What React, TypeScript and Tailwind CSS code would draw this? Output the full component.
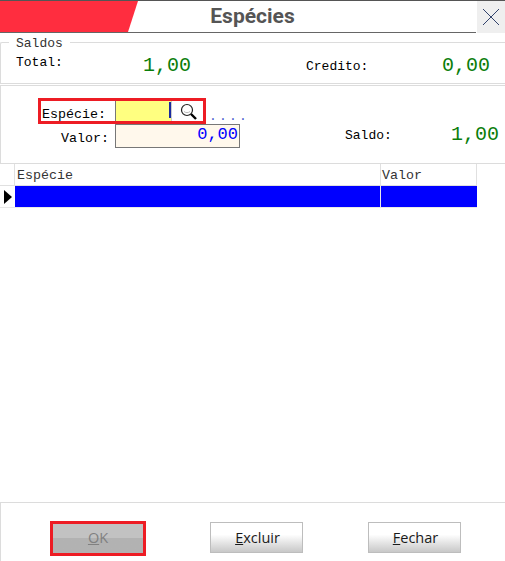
import React from "react";

const mono = "font-['Liberation_Mono',monospace]";
const btnFont = "font-['Open_Sans','Noto_Sans',sans-serif]";

function FooterButton({ label, rest }: { label: string; rest: string }) {
  return (
    <div className={`w-[93px] h-[31px] flex items-center justify-center border border-[#bdbdbd] bg-gradient-to-b from-white from-40% to-[#c8c8c8] text-[14.5px] text-[#1a1a1a] ${btnFont}`}>
      <span className="pl-[2px]">
        <span className="underline">{label}</span>
        {rest}
      </span>
    </div>
  );
}

function SearchIcon() {
  return (
    <svg width="18" height="18" viewBox="0 0 18 18" fill="none">
      <circle cx="7" cy="7" r="5.5" stroke="#222" strokeWidth="1.2" fill="#fff" />
      <path d="M4 8.5c1.5 1.5 4.5 1.5 6 0" stroke="#bbb" strokeWidth="1" />
      <path d="M11 11l5 5" stroke="#000" strokeWidth="2.4" />
    </svg>
  );
}

export default function App() {
  return (
    <div className="w-[505px] h-[561px] bg-white flex flex-col overflow-hidden">
      {/* title bar */}
      <div className="h-[33px] shrink-0 flex border-t border-t-[#555] relative">
        <div className="flex-1 border-b border-b-[#666] flex items-center justify-center pl-[29px] pt-px">
          <span className="text-[21px] font-bold text-[#555] font-['Roboto',sans-serif]">Espécies</span>
        </div>
        <div className="absolute left-0 top-0 w-[138px] h-[31px] bg-[#ff2d3f] [clip-path:polygon(0_0,100%_0,128px_100%,0_100%)]" />
        <div className="w-[28px] bg-[#efefef] flex items-center justify-center ml-px">
          <svg width="18" height="18" viewBox="0 0 18 18" fill="none">
            <path d="M1 1l16 16M17 1L1 17" stroke="#1c2f5c" strokeWidth="0.9" />
          </svg>
        </div>
      </div>

      {/* saldos */}
      <div className={`relative mt-[9px] h-[42px] shrink-0 border-t border-b border-l border-[#dcdcdc] rounded-tl-[2px] flex items-start text-[13px] ${mono}`}>
        <span className="absolute left-[8px] -top-[6px] bg-white px-[7px] text-[#333] leading-[14px]">Saldos</span>
        <span className="ml-[15px] mt-[13px] w-[115px] leading-[14px] text-black">Total:</span>
        <span className="mt-[12px] w-[60px] text-right text-[20px] leading-[22px] text-[#0a7d0a]">1,00</span>
        <span className="ml-[115px] mt-[17px] w-[137px] leading-[14px] text-black">Credito:</span>
        <span className="mt-[12px] -ml-[1px] text-[20px] leading-[22px] text-[#0a7d0a]">0,00</span>
      </div>

      {/* especie / valor */}
      <div className={`mt-px h-[79px] shrink-0 border-t border-b border-l border-[#dcdcdc] pt-[12px] ${mono}`}>
        <div className="flex items-start">
          <div className="ml-[37px] w-[168px] h-[26px] border-[3px] border-[#ed1c24] flex items-stretch">
            <span className="w-[74px] pl-px pt-[1px] text-[13.33px] leading-[26px] text-black">Espécie:</span>
            <div className="w-[57px] bg-[#ffff80] border-l border-l-[#777] border-r border-r-[#ccc] flex justify-end pt-[1px]">
              <div className="w-[2px] h-[16px] bg-[#1a2aa0]" />
            </div>
            <div className="flex-1 flex items-center justify-center pt-[1px] pl-[2px]">
              <SearchIcon />
            </div>
          </div>
          <span className="ml-[3px] mt-[11px] text-[13px] leading-[16px] tracking-[2.2px] text-[#4a5fd0]">....</span>
        </div>
        <div className="flex items-start -mt-px">
          <span className="ml-[60px] w-[54px] mt-[7px] text-[13.33px] leading-[15px] text-black">Valor:</span>
          <div className="w-[125px] h-[24px] border border-[#777] bg-[#fff8ec] text-right pr-px text-[17px] leading-[20px] text-[#0000ff]">0,00</div>
          <span className="ml-[105px] mt-[5px] w-[107px] text-[13px] leading-[14px] text-black">Saldo:</span>
          <span className="text-[20px] leading-[22px] -ml-[1px] text-[#0a7d0a]">1,00</span>
        </div>
      </div>

      {/* grid */}
      <div className={`flex-1 flex flex-col text-[13.33px] ${mono}`}>
        <div className="w-[477px] h-[22px] flex border-b border-[#e0e0e0]">
          <div className="w-[15px] border-r border-r-[#e0e0e0]" />
          <div className="w-[366px] border-r border-r-[#e0e0e0] pl-[2px] pt-[2px] leading-[20px] text-[#333]">Espécie</div>
          <div className="w-[96px] border-r border-r-[#e0e0e0] pl-[1px] pt-[2px] leading-[20px] text-[#333]">Valor</div>
        </div>
        <div className="w-[477px] h-[22px] flex border-b border-[#e8e8e8]">
          <div className="w-[15px] flex items-center pl-[4px]">
            <div className="w-0 h-0 border-y-[7px] border-y-transparent border-l-[8px] border-l-black" />
          </div>
          <div className="w-[365px] bg-[#0000ff]" />
          <div className="w-px bg-[#e8e8e8]" />
          <div className="w-[96px] bg-[#0000ff]" />
        </div>
      </div>

      {/* footer */}
      <div className="h-[59px] shrink-0 border-t border-l border-[#dcdcdc] flex items-start pt-[19px]">
        <div className="ml-[49px] w-[96px] h-[35px] -mt-[1px] pb-px border-[3px] border-[#ed1c24] flex items-center justify-center bg-gradient-to-b from-[#c2c2c2] from-50% to-[#b2b2b2] to-50%">
          <span className={`text-[14.5px] text-[#808080] ${btnFont}`}>
            <span className="underline">O</span>K
          </span>
        </div>
        <div className="ml-[64px]">
          <FooterButton label="E" rest="xcluir" />
        </div>
        <div className="ml-[65px]">
          <FooterButton label="F" rest="echar" />
        </div>
      </div>
    </div>
  );
}
